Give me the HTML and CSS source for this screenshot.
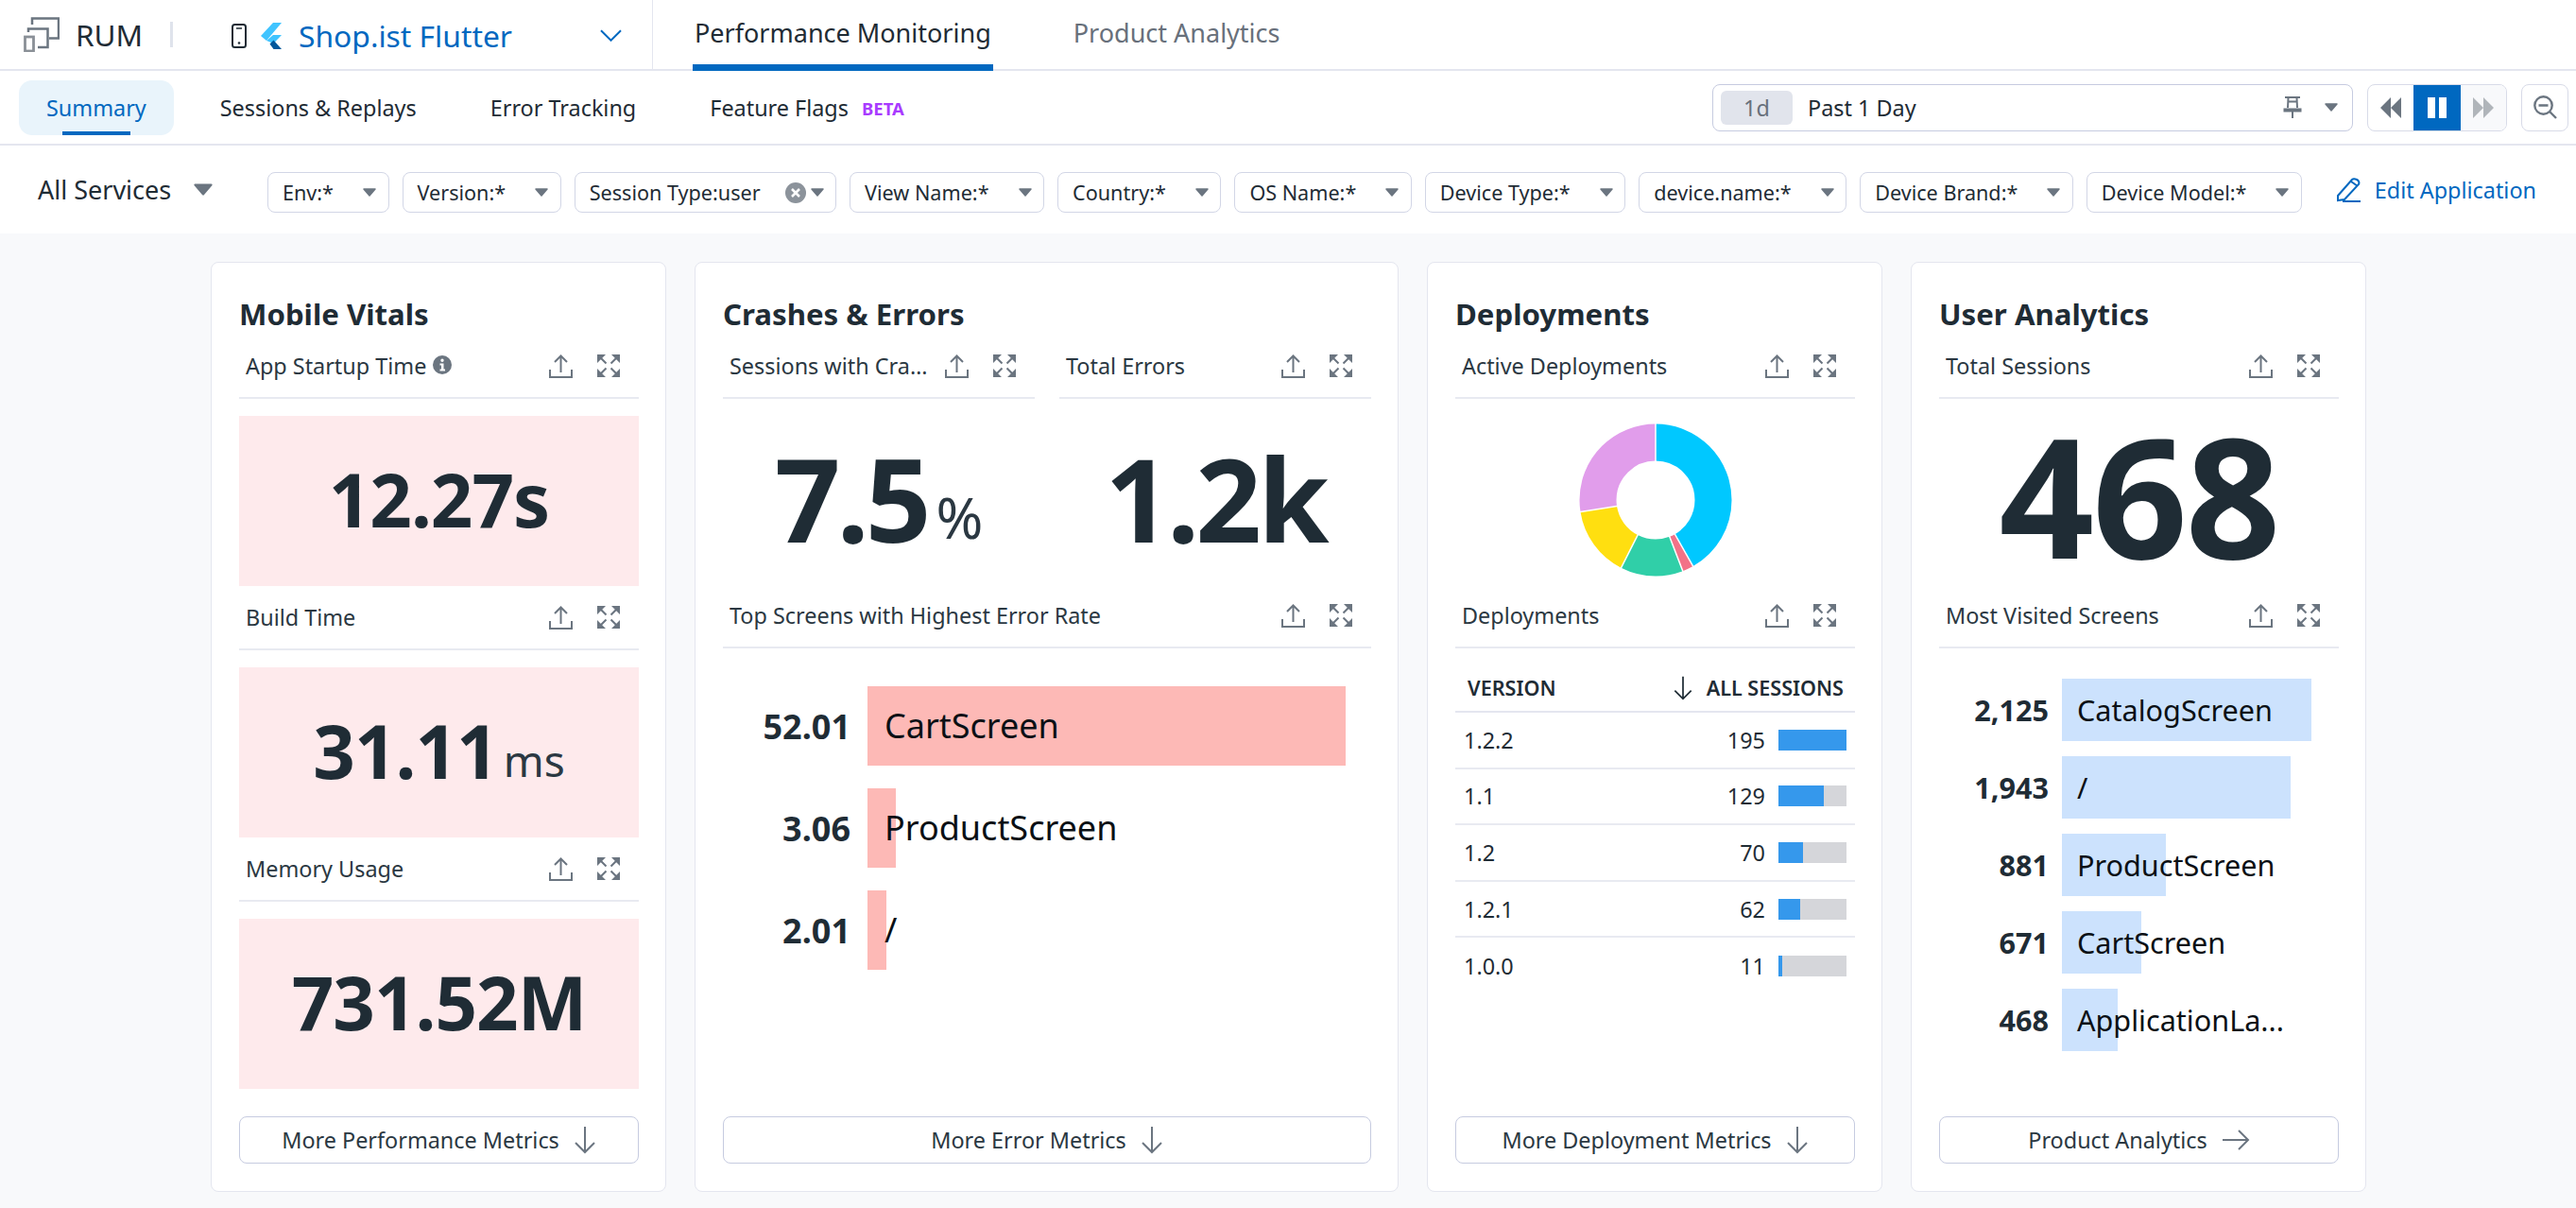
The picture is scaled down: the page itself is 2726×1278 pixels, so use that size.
FILE: index.html
```html
<!DOCTYPE html>
<html lang="en">
<head>
<meta charset="utf-8">
<title>RUM - Shop.ist Flutter</title>
<link rel="stylesheet" href="styles.css">
</head>
<body>
<svg class="defs" width="0" height="0" aria-hidden="true">
  <symbol id="share" viewBox="0 0 25 25"><path d="M1 16v8h23v-8M12.500 19V2M6 8l6.500-6.500L19 8" fill="none" stroke="#6b7580" stroke-width="2"/></symbol>
  <symbol id="expand" viewBox="0 0 24 24"><path d="M0 0h9L0 9zM24 0v9l-9-9zM0 24v-9l9 9zM24 24h-9l9-9z" fill="#6b7580"/><path d="M3 3l6.500 6.500M21 3l-6.500 6.500M3 21l6.500-6.500M21 21l-6.500-6.500" stroke="#6b7580" stroke-width="2" fill="none"/></symbol>
  <symbol id="caret" viewBox="0 0 14 9"><path d="M1 1h12L7 8z" fill="#6b7580" stroke="#6b7580" stroke-width="1.500" stroke-linejoin="round"/></symbol>
  <symbol id="down" viewBox="0 0 24 30"><path d="M12 1v27M2 18l10 10 10-10" fill="none" stroke="#6b7580" stroke-width="2"/></symbol>
  <symbol id="sort" viewBox="0 0 24 30"><path d="M12 1v27M2 18l10 10 10-10" fill="none" stroke="#1f2c35" stroke-width="2"/></symbol>
  <symbol id="right" viewBox="0 0 30 24"><path d="M1 12h27M18 2l10 10-10 10" fill="none" stroke="#6b7580" stroke-width="2"/></symbol>
</svg>

<header class="topnav">
  <div class="brand">
    <svg class="rum-icon" viewBox="0 0 38 37"><path d="M9 8V1.500H37V22.500H27M5 16V12.500H25.500V32H15" fill="none" stroke="#6b7580" stroke-width="2.500"/><rect x="1.500" y="21" width="9" height="15" fill="none" stroke="#8a9097" stroke-width="2.800"/></svg>
    <span class="brand-name">RUM</span>
    <span class="brand-sep"></span>
  </div>
  <div class="app-picker">
    <svg class="phone-icon" viewBox="0 0 16 26"><rect x="1" y="1" width="14" height="24" rx="2.500" fill="none" stroke="#1f2c35" stroke-width="2"/><path d="M5 5h6" stroke="#1f2c35" stroke-width="1.500"/><circle cx="8" cy="20.500" r="1.300" fill="#1f2c35"/></svg>
    <svg class="flutter-icon" viewBox="0 0 22 28"><path d="M22 0H13L0 14l6 5z" fill="#40c4ff"/><path d="M6 19l7-6h9l-8.500 9z" fill="#40c4ff"/><path d="M9.500 22.500l4-4L22 28h-8.500z" fill="#01579b"/></svg>
    <span class="app-name">Shop.ist Flutter</span>
    <svg class="chevron" viewBox="0 0 24 13"><path d="M1 1l11 11L23 1" fill="none" stroke="#0068c0" stroke-width="2"/></svg>
  </div>
  <nav class="main-tabs">
    <a class="main-tab is-active">Performance Monitoring</a>
    <a class="main-tab">Product Analytics</a>
  </nav>
</header>

<section class="subnav">
  <nav class="sub-tabs">
    <a class="sub-tab is-active">Summary</a>
    <a class="sub-tab">Sessions &amp; Replays</a>
    <a class="sub-tab">Error Tracking</a>
    <a class="sub-tab">Feature Flags <span class="beta">BETA</span></a>
  </nav>
  <div class="time-tools">
    <div class="time-picker">
      <span class="time-badge">1d</span>
      <span class="time-label">Past 1 Day</span>
      <svg class="pin" viewBox="0 0 20 23"><path d="M2 1h16M5.500 1.500L5 12M14.500 1.500L15 12M5 5.500h10M1.500 13.500h17v2h-17zM10 15v8" fill="none" stroke="#6b7580" stroke-width="2"/></svg>
      <svg class="caret-sm"><use href="#caret"/></svg>
    </div>
    <div class="player">
      <span class="player-btn"><svg class="player-icon" viewBox="0 0 22 22"><path d="M11 0v22L0 11zM22 0v22L11 11z" fill="#6b7580"/></svg></span>
      <span class="player-btn is-on"><span class="pause"></span><span class="pause"></span></span>
      <span class="player-btn is-off"><svg class="player-icon" viewBox="0 0 22 22"><path d="M0 0v22l11-11zM11 0v22l11-11z" fill="#b0b5ba"/></svg></span>
    </div>
    <span class="zoom-btn"><svg class="zoom-icon" viewBox="0 0 25 25"><circle cx="10.500" cy="10.500" r="9.200" fill="none" stroke="#6b7580" stroke-width="2.400"/><path d="M5.500 10.500h10M17 17l7 7" stroke="#6b7580" stroke-width="2.400" fill="none"/></svg></span>
  </div>
</section>

<section class="filters">
  <div class="service">All Services <svg class="caret-lg"><use href="#caret"/></svg></div>
  <div class="chips">
    <div class="chip">Env:*<svg class="caret-sm"><use href="#caret"/></svg></div>
    <div class="chip">Version:*<svg class="caret-sm"><use href="#caret"/></svg></div>
    <div class="chip chip-clear">Session Type:user<span class="clear"><svg viewBox="0 0 22 22"><circle cx="11" cy="11" r="11" fill="#8c939b"/><path d="M7 7l8 8M15 7l-8 8" stroke="#fff" stroke-width="2.500"/></svg></span><svg class="caret-sm"><use href="#caret"/></svg></div>
    <div class="chip">View Name:*<svg class="caret-sm"><use href="#caret"/></svg></div>
    <div class="chip">Country:*<svg class="caret-sm"><use href="#caret"/></svg></div>
    <div class="chip">OS Name:*<svg class="caret-sm"><use href="#caret"/></svg></div>
    <div class="chip">Device Type:*<svg class="caret-sm"><use href="#caret"/></svg></div>
    <div class="chip">device.name:*<svg class="caret-sm"><use href="#caret"/></svg></div>
    <div class="chip">Device Brand:*<svg class="caret-sm"><use href="#caret"/></svg></div>
    <div class="chip">Device Model:*<svg class="caret-sm"><use href="#caret"/></svg></div>
  </div>
  <a class="edit"><svg class="edit-icon" viewBox="0 0 26 26"><path d="M1 19L16 2c1-1 3-1 5 0s3 3 2 5L8 23l-7 1zM15 4l7 5M6 25h19" fill="none" stroke="#0068c0" stroke-width="2"/></svg>Edit Application</a>
</section>

<main class="board">
  <article class="card card-s">
    <h2 class="card-title">Mobile Vitals</h2>
    <div class="w-head"><span class="w-title">App Startup Time <svg class="info" viewBox="0 0 20 20"><circle cx="10" cy="10" r="10" fill="#6b7580"/><path d="M10 3.500a1.700 1.700 0 1 1 0 3.400 1.700 1.700 0 0 1 0-3.400zM7.500 8.500h4v6h1.500v2H7.500v-2H9v-4H7.500z" fill="#fff"/></svg></span><span class="w-icons"><svg class="i-share"><use href="#share"/></svg><svg class="i-expand"><use href="#expand"/></svg></span></div>
    <div class="stat stat-alert"><span class="num-m">12.27s</span></div>
    <div class="w-head"><span class="w-title">Build Time</span><span class="w-icons"><svg class="i-share"><use href="#share"/></svg><svg class="i-expand"><use href="#expand"/></svg></span></div>
    <div class="stat stat-alert"><span class="num-m">31.11</span><span class="unit-m">ms</span></div>
    <div class="w-head"><span class="w-title">Memory Usage</span><span class="w-icons"><svg class="i-share"><use href="#share"/></svg><svg class="i-expand"><use href="#expand"/></svg></span></div>
    <div class="stat stat-alert"><span class="num-m">731.52M</span></div>
    <a class="more">More Performance Metrics<svg class="i-down"><use href="#down"/></svg></a>
  </article>

  <article class="card card-l">
    <h2 class="card-title">Crashes &amp; Errors</h2>
    <div class="two-col">
      <div class="col">
        <div class="w-head"><span class="w-title w-trunc">Sessions with Crashes</span><span class="w-icons"><svg class="i-share"><use href="#share"/></svg><svg class="i-expand"><use href="#expand"/></svg></span></div>
        <div class="stat"><span class="num-l">7.5</span><span class="unit-l">%</span></div>
      </div>
      <div class="col">
        <div class="w-head"><span class="w-title">Total Errors</span><span class="w-icons"><svg class="i-share"><use href="#share"/></svg><svg class="i-expand"><use href="#expand"/></svg></span></div>
        <div class="stat"><span class="num-l">1.2k</span></div>
      </div>
    </div>
    <div class="w-head"><span class="w-title">Top Screens with Highest Error Rate</span><span class="w-icons"><svg class="i-share"><use href="#share"/></svg><svg class="i-expand"><use href="#expand"/></svg></span></div>
    <div class="toplist toplist-err">
      <div class="tl-row"><span class="tl-val">52.01</span><div class="tl-track"><span class="tl-bar" style="width:100%"></span><span class="tl-name">CartScreen</span></div></div>
      <div class="tl-row"><span class="tl-val">3.06</span><div class="tl-track"><span class="tl-bar" style="width:5.900%"></span><span class="tl-name">ProductScreen</span></div></div>
      <div class="tl-row"><span class="tl-val">2.01</span><div class="tl-track"><span class="tl-bar" style="width:3.900%"></span><span class="tl-name">/</span></div></div>
    </div>
    <a class="more">More Error Metrics<svg class="i-down"><use href="#down"/></svg></a>
  </article>

  <article class="card card-s">
    <h2 class="card-title">Deployments</h2>
    <div class="w-head"><span class="w-title">Active Deployments</span><span class="w-icons"><svg class="i-share"><use href="#share"/></svg><svg class="i-expand"><use href="#expand"/></svg></span></div>
    <div class="donut-wrap">
      <svg class="donut" viewBox="0 0 164 164">
        <g fill="none" stroke-width="39" transform="rotate(-90 82 82)">
          <circle cx="82" cy="82" r="61" pathLength="100" stroke="#00c8ff" stroke-dasharray="41.800 58.200" stroke-dashoffset="0"/>
          <circle cx="82" cy="82" r="61" pathLength="100" stroke="#f27288" stroke-dasharray="2.400 97.600" stroke-dashoffset="-41.800"/>
          <circle cx="82" cy="82" r="61" pathLength="100" stroke="#30cfa8" stroke-dasharray="13.300 86.700" stroke-dashoffset="-44.200"/>
          <circle cx="82" cy="82" r="61" pathLength="100" stroke="#ffdf10" stroke-dasharray="15 85" stroke-dashoffset="-57.500"/>
          <circle cx="82" cy="82" r="61" pathLength="100" stroke="#e19deb" stroke-dasharray="27.500 72.500" stroke-dashoffset="-72.500"/>
        </g>
        <path d="M82 42V0M101.700 116.800L122.400 153.400M96.300 119.400L111.300 158.600M63.800 117.600L44.800 155.100M42.500 88.200L1 94.800" stroke="#fff" stroke-width="1.500" fill="none"/>
      </svg>
    </div>
    <div class="w-head"><span class="w-title">Deployments</span><span class="w-icons"><svg class="i-share"><use href="#share"/></svg><svg class="i-expand"><use href="#expand"/></svg></span></div>
    <div class="dtable">
      <div class="d-head"><span>VERSION</span><span class="d-sort"><svg class="i-sort"><use href="#sort"/></svg>ALL SESSIONS</span></div>
      <div class="d-row"><span>1.2.2</span><span class="d-num">195</span><span class="d-track"><span class="d-fill" style="width:100%"></span></span></div>
      <div class="d-row"><span>1.1</span><span class="d-num">129</span><span class="d-track"><span class="d-fill" style="width:66%"></span></span></div>
      <div class="d-row"><span>1.2</span><span class="d-num">70</span><span class="d-track"><span class="d-fill" style="width:36%"></span></span></div>
      <div class="d-row"><span>1.2.1</span><span class="d-num">62</span><span class="d-track"><span class="d-fill" style="width:32%"></span></span></div>
      <div class="d-row"><span>1.0.0</span><span class="d-num">11</span><span class="d-track"><span class="d-fill" style="width:5.600%"></span></span></div>
    </div>
    <a class="more">More Deployment Metrics<svg class="i-down"><use href="#down"/></svg></a>
  </article>

  <article class="card card-s">
    <h2 class="card-title">User Analytics</h2>
    <div class="w-head"><span class="w-title">Total Sessions</span><span class="w-icons"><svg class="i-share"><use href="#share"/></svg><svg class="i-expand"><use href="#expand"/></svg></span></div>
    <div class="stat"><span class="num-xl">468</span></div>
    <div class="w-head"><span class="w-title">Most Visited Screens</span><span class="w-icons"><svg class="i-share"><use href="#share"/></svg><svg class="i-expand"><use href="#expand"/></svg></span></div>
    <div class="toplist toplist-visits">
      <div class="tl-row"><span class="tl-val">2,125</span><div class="tl-track"><span class="tl-bar" style="width:100%"></span><span class="tl-name">CatalogScreen</span></div></div>
      <div class="tl-row"><span class="tl-val">1,943</span><div class="tl-track"><span class="tl-bar" style="width:91.700%"></span><span class="tl-name">/</span></div></div>
      <div class="tl-row"><span class="tl-val">881</span><div class="tl-track"><span class="tl-bar" style="width:41.700%"></span><span class="tl-name">ProductScreen</span></div></div>
      <div class="tl-row"><span class="tl-val">671</span><div class="tl-track"><span class="tl-bar" style="width:31.800%"></span><span class="tl-name">CartScreen</span></div></div>
      <div class="tl-row"><span class="tl-val">468</span><div class="tl-track"><span class="tl-bar" style="width:22.300%"></span><span class="tl-name">ApplicationLa...</span></div></div>
    </div>
    <a class="more">Product Analytics<svg class="i-right"><use href="#right"/></svg></a>
  </article>
</main>
</body>
</html>
```
FILE: styles.css
```css
* { box-sizing: border-box; }
html, body { height: 100%; }
body {
  margin: 0;
  background: #f8f9fb;
  color: #1f2c35;
  font-family: "Noto Sans", "Open Sans", sans-serif;
  overflow: hidden;
}
a { color: inherit; text-decoration: none; }
.defs { display: block; height: 0; }

/* top nav */
.topnav {
  display: flex;
  height: 75px;
  background: #fff;
  border-bottom: 2px solid #e4e6ef;
}
.brand { display: flex; align-items: center; width: 216px; padding-left: 25px; flex: none; }
.rum-icon { width: 38px; height: 37px; margin-right: 17px; }
.brand-name { font-size: 31.500px; margin-right: 29px; }
.brand-sep { width: 3px; height: 27px; background: #dfe3ec; }
.app-picker {
  display: flex;
  align-items: center;
  width: 475px;
  padding: 0 32px 0 29px;
  border-right: 1px solid #e4e6ef;
  margin-bottom: -2px;
  flex: none;
}
.phone-icon { width: 16px; height: 26px; margin-right: 15px; }
.flutter-icon { width: 22px; height: 28px; margin-right: 18px; }
.app-name { font-size: 31.800px; color: #0068c0; }
.chevron { width: 23px; height: 13px; margin-left: auto; }
.main-tabs { display: flex; gap: 83px; padding-left: 42px; }
.main-tab {
  display: flex;
  align-items: center;
  height: 75px;
  padding: 0 2px 6px;
  font-size: 27px;
  color: #68707b;
}
.main-tab.is-active { color: #1f2c35; border-bottom: 7px solid #0068c0; padding-bottom: 0; }

/* sub nav */
.subnav {
  display: flex;
  justify-content: space-between;
  align-items: center;
  height: 79px;
  background: #fff;
  border-bottom: 2px solid #e4e6ef;
  padding: 0 8px 0 20px;
}
.sub-tabs { display: flex; gap: 20px; }
.sub-tab {
  display: flex;
  align-items: center;
  gap: 14px;
  height: 58px;
  padding: 0 29px;
  font-size: 23.400px;
  border-radius: 14px;
  position: relative;
}
.sub-tab.is-active { background: #e9f4fb; color: #0068c0; }
.sub-tab.is-active::after {
  content: "";
  position: absolute;
  left: 46px;
  right: 46px;
  bottom: 0;
  height: 4px;
  background: #0068c0;
}
.beta { font-size: 18.500px; font-weight: 700; color: #a93bff; padding-top: 2px; }
.time-tools { display: flex; align-items: center; gap: 15px; }
.time-picker {
  display: flex;
  align-items: center;
  width: 678px;
  height: 50px;
  padding: 0 15px 0 8px;
  background: #fff;
  border: 1.500px solid #c6cbe0;
  border-radius: 8px;
  font-size: 23.400px;
}
.time-badge {
  display: flex;
  align-items: center;
  justify-content: center;
  width: 76px;
  height: 36px;
  background: #e1e4ec;
  border-radius: 6px;
  color: #68707b;
}
.time-label { margin-left: 16px; flex: 1; }
.pin { width: 20px; height: 23px; margin-right: 24px; }
.caret-sm { width: 14px; height: 9px; flex: none; }
.player {
  display: flex;
  width: 148px;
  height: 50px;
  border: 1.500px solid #d8dbe8;
  border-radius: 8px;
  overflow: hidden;
  background: #fff;
}
.player-btn { flex: 1; display: flex; align-items: center; justify-content: center; gap: 4px; }
.player-btn.is-on { flex: 0 0 50px; background: #0068c0; margin: -2px 0; }
.player-btn.is-off { background: #f8f9fb; }
.player-icon { width: 22px; height: 22px; }
.pause { width: 8px; height: 22px; background: #fff; }
.zoom-btn {
  display: flex;
  align-items: center;
  justify-content: center;
  width: 50px;
  height: 50px;
  border: 1.500px solid #d8dbe8;
  border-radius: 8px;
  background: #fff;
}
.zoom-icon { width: 25px; height: 25px; }

/* filters */
.filters {
  display: flex;
  align-items: center;
  height: 93px;
  padding: 0 42px 0 40px;
  background: #fff;
}
.service {
  display: flex;
  align-items: center;
  width: 243px;
  font-size: 27px;
  flex: none;
}
.caret-lg { width: 20px; height: 13px; margin-left: 24px; }
.chips { display: flex; gap: 14px; flex: none; margin-top: 6px; }
.chip {
  display: flex;
  align-items: center;
  gap: 31px;
  height: 43px;
  padding: 0 12.500px 0 15px;
  background: #fff;
  border: 1.500px solid #d2d6e6;
  border-radius: 8px;
  font-size: 21.600px;
}
.chip-clear { gap: 5px; }
.clear { display: flex; margin-left: 21px; }
.clear svg { width: 22px; height: 22px; }
.edit {
  display: flex;
  align-items: center;
  gap: 14px;
  margin-left: auto;
  font-size: 23.400px;
  color: #0068c0;
  white-space: nowrap;
}
.edit-icon { width: 26px; height: 26px; }

/* board */
.board {
  display: flex;
  justify-content: center;
  gap: 30px;
  padding: 30px 0 0 1px;
}
.card {
  display: flex;
  flex-direction: column;
  height: 984px;
  padding: 34px 28px 29px 29px;
  background: #fff;
  border: 1px solid #e4e6ef;
  border-radius: 8px;
}
.card-s { width: 482px; }
.card-l { width: 745px; }
.card-title {
  margin: 0 0 1px;
  height: 41px;
  font-size: 31.200px;
  line-height: 41px;
  font-weight: 700;
  white-space: nowrap;
}
.w-head {
  display: flex;
  justify-content: space-between;
  align-items: center;
  height: 68px;
  flex: none;
  padding: 0 20px 0 7px;
  border-bottom: 2px solid #e8eaf1;
  margin-bottom: 18px;
}
.w-title {
  display: flex;
  align-items: center;
  gap: 7px;
  font-size: 23.400px;
  color: #2b3842;
  white-space: nowrap;
}
.w-trunc { display: block; width: 214px; overflow: hidden; text-overflow: ellipsis; }
.info { width: 20px; height: 20px; margin-bottom: 3px; }
.w-icons { display: flex; align-items: center; gap: 26px; flex: none; }
.i-share { width: 25px; height: 25px; }
.i-expand { width: 24px; height: 24px; }
.stat {
  display: flex;
  align-items: center;
  justify-content: center;
  height: 178px;
  padding-bottom: 4px;
  flex: none;
}
.stat-alert { height: 180px; background: #feeaec; }
.num-m { font-size: 78px; font-weight: 700; line-height: 1; letter-spacing: -1px; color: #1f2c35; }
.unit-m { font-size: 46px; margin-left: 6px; margin-top: 20px; color: #2b3842; }
.num-l { font-size: 122px; font-weight: 700; line-height: 1; letter-spacing: -4px; }
.unit-l { font-size: 60px; margin-left: 9px; margin-top: 40px; color: #2b3842; }
.num-xl { font-size: 176px; font-weight: 700; line-height: 1; letter-spacing: -2px; padding-bottom: 8px; }
.two-col { display: flex; gap: 26px; }
.col { flex: 1; min-width: 0; }

/* top lists */
.toplist { display: flex; flex-direction: column; }
.tl-row { display: flex; align-items: center; }
.tl-val { text-align: right; font-weight: 700; flex: none; }
.tl-track { position: relative; display: flex; align-items: center; }
.tl-bar { position: absolute; left: 0; top: 0; bottom: 0; }
.tl-name { position: relative; color: #0b1015; white-space: nowrap; }
.toplist-err { gap: 24px; margin-top: 22px; }
.toplist-err .tl-row { height: 84px; }
.toplist-err .tl-val { width: 135px; font-size: 36px; }
.toplist-err .tl-track { width: 506px; height: 84px; margin-left: 18px; padding: 0 0 2px 18px; }
.toplist-err .tl-bar { background: #fdb9b6; }
.toplist-err .tl-name { font-size: 36px; }
.toplist-visits { gap: 16.500px; margin-top: 14px; }
.toplist-visits .tl-row { height: 65.500px; }
.toplist-visits .tl-val { width: 116px; font-size: 30.600px; }
.toplist-visits .tl-track { width: 264px; height: 65.500px; margin-left: 14px; padding-left: 16px; }
.toplist-visits .tl-bar { background: #cce2fd; }
.toplist-visits .tl-name { font-size: 30.600px; }

/* donut */
.donut-wrap { display: flex; justify-content: center; height: 178px; flex: none; padding-top: 7px; }
.donut { width: 164px; height: 164px; }

/* table */
.dtable { margin-top: -18px; font-size: 23.400px; }
.d-head {
  display: flex;
  justify-content: space-between;
  align-items: center;
  height: 68px;
  padding: 17px 12px 0 13px;
  border-bottom: 2.500px solid #e4e6ef;
  font-size: 21.600px;
  font-weight: 600;
}
.d-sort { display: flex; align-items: center; gap: 14px; }
.i-sort { width: 22px; height: 26px; }
.d-row {
  display: flex;
  align-items: center;
  height: 59.600px;
  padding: 0 9px 0 9px;
  border-bottom: 2px solid #e8eaf1;
}
.d-row:last-child { border-bottom: 0; }
.d-num { margin-left: auto; }
.d-track { width: 72px; height: 22px; margin-left: 14px; background: #d5d6da; }
.d-fill { display: block; height: 100%; background: #3598ec; }

/* footer button */
.more {
  display: flex;
  align-items: center;
  justify-content: center;
  gap: 15px;
  height: 50px;
  margin-top: auto;
  flex: none;
  border: 1.500px solid #c6cbe0;
  border-radius: 8px;
  font-size: 23.400px;
  color: #2b3842;
}
.i-down { width: 24px; height: 30px; }
.i-right { width: 30px; height: 24px; }
```
